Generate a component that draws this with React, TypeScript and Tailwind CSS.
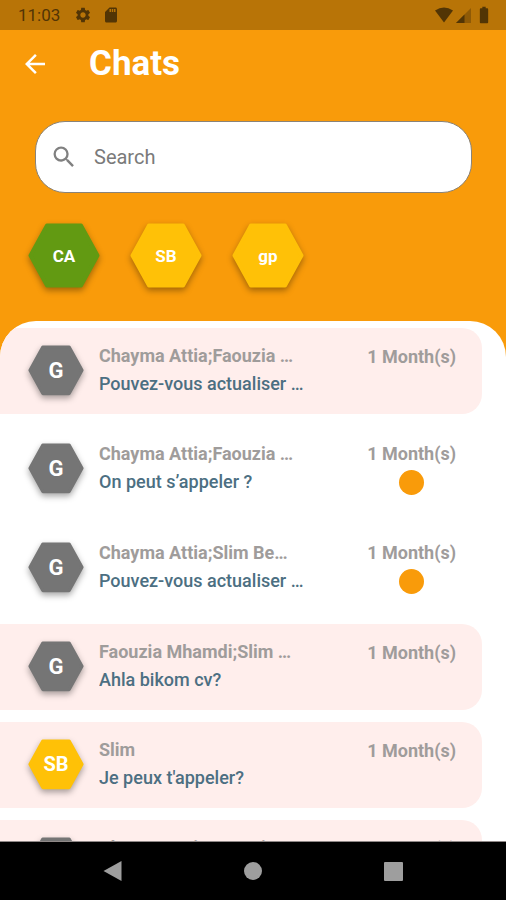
import { MdArrowBack, MdBatteryFull, MdSdCard, MdSearch, MdSettings } from "react-icons/md";

type Contact = { initials: string; color: string };

type Chat = {
  initials: string;
  color: string;
  name: string;
  message?: string;
  time: string;
  highlighted: boolean;
};

const contacts: Contact[] = [
  { initials: "CA", color: "text-[#629a12]" },
  { initials: "SB", color: "text-[#ffc107]" },
  { initials: "gp", color: "text-[#ffc107]" },
];

const chats: Chat[] = [
  { initials: "G", color: "text-[#757575]", name: "Chayma Attia;Faouzia …", message: "Pouvez-vous actualiser …", time: "1 Month(s)", highlighted: true },
  { initials: "G", color: "text-[#757575]", name: "Chayma Attia;Faouzia …", message: "On peut s’appeler ?", time: "1 Month(s)", highlighted: false },
  { initials: "G", color: "text-[#757575]", name: "Chayma Attia;Slim Be…", message: "Pouvez-vous actualiser …", time: "1 Month(s)", highlighted: false },
  { initials: "G", color: "text-[#757575]", name: "Faouzia Mhamdi;Slim …", message: "Ahla bikom cv?", time: "1 Month(s)", highlighted: true },
  { initials: "SB", color: "text-[#ffc107]", name: "Slim", message: "Je peux t'appeler?", time: "1 Month(s)", highlighted: true },
  { initials: "G", color: "text-[#757575]", name: "Chayma Attia;Faouzia …", time: "1 Month(s)", highlighted: true },
];

function Hexagon({ className }: { className: string }) {
  return (
    <svg
      viewBox="0 0 72 65"
      className={`col-start-1 row-start-1 w-full drop-shadow-[0_3px_3px_rgba(0,0,0,0.35)] ${className}`}
      aria-hidden="true"
    >
      <path
        d="M19 2.5H53L69.5 32.5L53 62.5H19L2.5 32.5Z"
        fill="currentColor"
        stroke="currentColor"
        strokeWidth="4"
        strokeLinejoin="round"
      />
    </svg>
  );
}

function StatusBar() {
  return (
    <div className="flex h-[30px] shrink-0 items-center bg-[#b87407] pl-[18px] pr-3 text-[#523505]">
      <span className="text-[17px] leading-6">11:03</span>
      <MdSettings className="ml-3.5 size-[18px]" />
      <MdSdCard className="ml-2.5 size-[18px]" />
      <div className="ml-auto flex items-center gap-[3px]">
        {/* wifi */}
        <svg viewBox="0 0 18 16" className="h-4 w-[18px]" fill="currentColor" aria-hidden="true">
          <path d="M0 3.5Q9-2.6 18 3.5L9 15.5Z" />
        </svg>
        {/* signal */}
        <svg viewBox="0 0 15 15" className="size-[15px]" fill="currentColor" aria-hidden="true">
          <path d="M15 0V15H0Z" opacity="0.4" />
          <path d="M8.500 6.500V15H0Z" />
        </svg>
        <MdBatteryFull className="size-5" />
      </div>
    </div>
  );
}

function ChatRow({ chat }: { chat: Chat }) {
  return (
    <li className="mr-6">
      <a
        href="#chat"
        className={`flex items-start rounded-r-[20px] pl-7 pr-[26px] ${chat.highlighted ? "h-[86px] bg-[#ffeeec]" : "h-[87px]"}`}
      >
        <span className="mt-[17px] grid w-14 shrink-0 place-items-center">
          <Hexagon className={chat.color} />
          <span
            className={`z-10 col-start-1 row-start-1 font-bold text-white ${chat.initials.length > 1 ? "text-xl" : "text-[22px]"}`}
          >
            {chat.initials}
          </span>
        </span>
        <span className="ml-[15px] mt-4 min-w-0 flex-1 text-lg">
          <span className="block truncate font-bold leading-6 text-[#9f9c9b]">{chat.name}</span>
          {chat.message && (
            <span className="mt-1 block truncate font-medium leading-6 text-[#4c6f82]">{chat.message}</span>
          )}
        </span>
        <span
          className={`flex shrink-0 flex-col items-center text-lg font-bold leading-6 text-[#9f9c9b] ${chat.highlighted ? "mt-[17px]" : "mt-4"}`}
        >
          {chat.time}
          {!chat.highlighted && <span className="mt-1 size-[25px] rounded-full bg-[#f99b0a]" />}
        </span>
      </a>
    </li>
  );
}

function NavBar() {
  return (
    <nav className="flex h-[59px] shrink-0 justify-center border-t border-[#8f8887] bg-black text-[#9e9e9e]">
      <button type="button" aria-label="Back" className="grid w-[140px] place-items-center">
        <svg viewBox="0 0 20 20" className="size-5" fill="currentColor" aria-hidden="true">
          <path d="M18.500 0V20L0.500 10Z" />
        </svg>
      </button>
      <button type="button" aria-label="Home" className="grid w-[140px] place-items-center">
        <span className="size-[18px] rounded-full bg-current" />
      </button>
      <button type="button" aria-label="Recent apps" className="grid w-[140px] place-items-center">
        <span className="size-[19px] rounded-[1px] bg-current" />
      </button>
    </nav>
  );
}

export default function App() {
  return (
    <div className="flex h-screen flex-col bg-[#f99b0a] font-[Roboto,sans-serif]">
      <StatusBar />

      <header className="shrink-0">
        <div className="flex h-[68px] items-center pl-5">
          <button type="button" aria-label="Back" className="text-white">
            <MdArrowBack className="size-[30px]" />
          </button>
          <h1 className="ml-[39px] text-[35px] font-bold leading-10 text-white">Chats</h1>
        </div>

        <label className="ml-[35px] mr-[34px] mt-[23px] flex h-[72px] items-center rounded-[30px] border border-[#8a8378] bg-white pl-3.5 pr-6">
          <MdSearch className="size-7 shrink-0 text-[#808080]" />
          <input
            type="text"
            aria-label="Search"
            placeholder="Search"
            className="ml-4 min-w-0 flex-1 bg-transparent text-xl text-[#333] outline-none placeholder:text-[#7a7a7a]"
          />
        </label>

        <div className="mt-[30px] flex gap-[30px] pb-[33px] pl-7">
          {contacts.map((c) => (
            <button key={c.initials} type="button" className="grid w-[72px] place-items-center">
              <Hexagon className={c.color} />
              <span className="z-10 col-start-1 row-start-1 text-[17px] font-bold leading-6 text-white">
                {c.initials}
              </span>
            </button>
          ))}
        </div>
      </header>

      <main className="min-h-0 flex-1 overflow-hidden rounded-t-[36px] bg-white pt-[7px]">
        <ul className="flex flex-col gap-3">
          {chats.map((chat, i) => (
            <ChatRow key={i} chat={chat} />
          ))}
        </ul>
      </main>

      <NavBar />
    </div>
  );
}
